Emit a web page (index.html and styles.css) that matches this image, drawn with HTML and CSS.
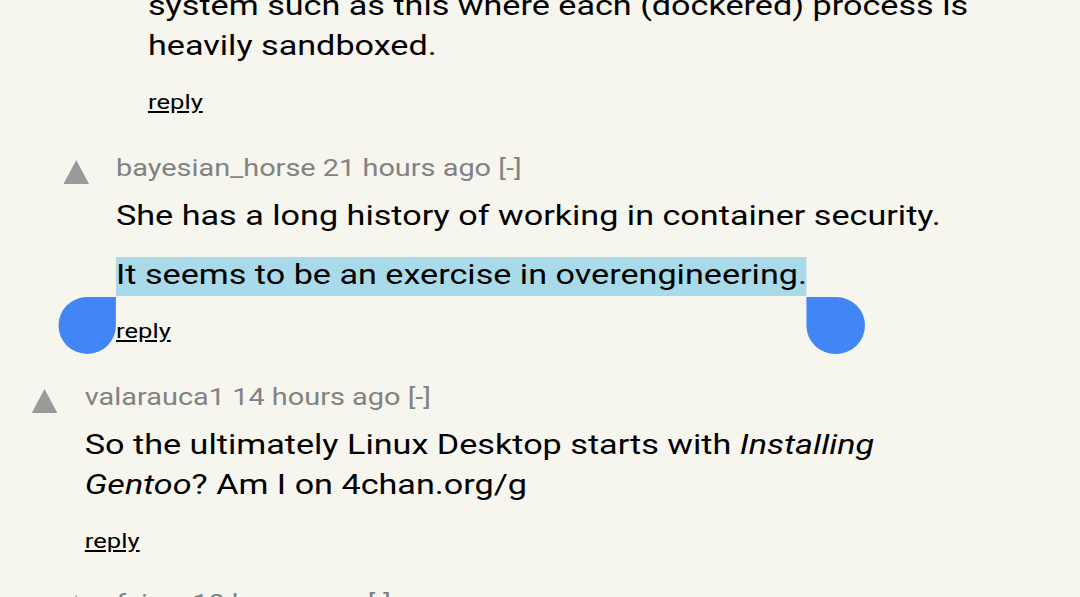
FILE: index.html
```html
<!DOCTYPE html>
<html lang="en">
<head>
<meta charset="utf-8">
<title>Comments</title>
<link rel="stylesheet" href="styles.css">
</head>
<body>
<div class="thread">
  <div class="comment lvl3">
    <div class="vote"></div>
    <div class="content">
      <div class="text">
        <p>system such as this where each (dockered) process is heavily sandboxed.</p>
      </div>
      <div class="reply"><a href="#">reply</a></div>
    </div>
  </div>

  <div class="comment lvl2">
    <div class="vote"><svg class="arrow" viewBox="0 0 26 26" width="21" height="26" preserveAspectRatio="none"><polygon points="13,1 26,25 0,25"/></svg></div>
    <div class="content">
      <div class="head">bayesian_horse 21 hours ago [-]</div>
      <div class="text">
        <p>She has a long history of working in container security.</p>
        <p><span class="sel">It seems to be an exercise in overengineering.<span class="handle handle-start"></span><span class="handle handle-end"></span></span></p>
      </div>
      <div class="reply"><a href="#">reply</a></div>
    </div>
  </div>

  <div class="comment lvl1">
    <div class="vote"><svg class="arrow" viewBox="0 0 26 26" width="21" height="26" preserveAspectRatio="none"><polygon points="13,1 26,25 0,25"/></svg></div>
    <div class="content">
      <div class="head">valarauca1 14 hours ago [-]</div>
      <div class="text">
        <p>So the ultimately Linux Desktop starts with <i>Installing Gentoo</i>? Am I on 4chan.org/g</p>
      </div>
      <div class="reply"><a href="#">reply</a></div>
    </div>
  </div>

  <div class="comment lvl2 comment-next">
    <div class="vote"><svg class="arrow" viewBox="0 0 26 26" width="21" height="26" preserveAspectRatio="none"><polygon points="13,1 26,25 0,25"/></svg></div>
    <div class="content">
      <div class="head">fsiwe 10 hours ago [-]</div>
      <div class="text">
        <p>Reading through the post, it does look rather involved.</p>
      </div>
    </div>
  </div>
</div>
</body>
</html>
```

FILE: styles.css
```css
html, body {
  margin: 0;
  padding: 0;
  background: #f6f6ef;
  overflow: hidden;
}

body {
  font-family: Roboto, "Noto Sans", "Liberation Sans", sans-serif;
  color: #000;
}

/* The capture is horizontally stretched relative to its height */
.thread {
  width: 885px;
  box-sizing: border-box;
  margin-top: -14px;
  padding-right: 80px;
  transform: scaleX(1.22);
  transform-origin: 0 0;
}

.comment {
  display: flex;
  align-items: flex-start;
}

.comment + .comment {
  margin-top: 33px;
}

.comment + .comment-next {
  margin-top: 29px;
}

.lvl1 { padding-left: 26px; }
.lvl2 { padding-left: 51.6px; }
.lvl3 { padding-left: 77.8px; }

.vote {
  flex: 0 0 43.5px;
  padding-top: 8px;
}

.arrow {
  display: block;
  fill: #9a9a9a;
}

.content {
  flex: 1 1 auto;
  min-width: 0;
}

.head {
  font-size: 23.7px;
  line-height: 34px;
  color: #828282;
  margin-bottom: 11px;
}

.text {
  font-size: 28px;
  line-height: 40px;
}

.text p {
  margin: 0;
}

.text p + p {
  margin-top: 19px;
}

.sel {
  position: relative;
  background: #a8daea;
  padding: 1px 0 5px;
}

.handle {
  position: absolute;
  top: calc(100% + 1px);
  width: 47.5px;
  height: 57px;
  background: #4285f4;
}

.handle-start {
  left: -47.5px;
  border-radius: 50% 0 50% 50%;
}

.handle-end {
  left: 100%;
  border-radius: 0 50% 50% 50%;
}

.reply {
  margin-top: 20px;
  font-size: 21px;
  line-height: 32px;
}

.reply a {
  color: #000;
  text-decoration: underline;
}
```
